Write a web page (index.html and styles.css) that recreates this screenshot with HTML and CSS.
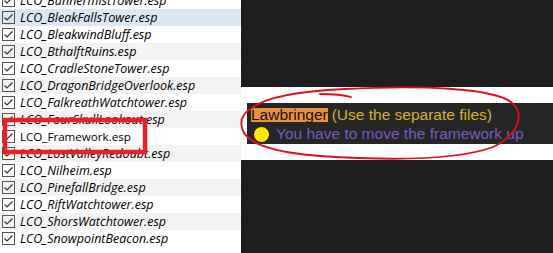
FILE: index.html
```html
<!DOCTYPE html>
<html>
<head>
<meta charset="utf-8">
<link rel="stylesheet" href="styles.css">
</head>
<body>
<div class="app">
  <div class="list">
    <div class="row"><span class="cb"><svg viewBox="0 0 13 13"><rect x="0.5" y="0.5" width="12" height="12"/><polyline points="2.5,6.5 5,9 10.5,3.5"/></svg></span><span class="name">LCO_BunnermistTower.esp</span></div>
    <div class="row sel"><span class="cb"><svg viewBox="0 0 13 13"><rect x="0.5" y="0.5" width="12" height="12"/><polyline points="2.5,6.5 5,9 10.5,3.5"/></svg></span><span class="name">LCO_BleakFallsTower.esp</span></div>
    <div class="row"><span class="cb"><svg viewBox="0 0 13 13"><rect x="0.5" y="0.5" width="12" height="12"/><polyline points="2.5,6.5 5,9 10.5,3.5"/></svg></span><span class="name">LCO_BleakwindBluff.esp</span></div>
    <div class="row alt"><span class="cb"><svg viewBox="0 0 13 13"><rect x="0.5" y="0.5" width="12" height="12"/><polyline points="2.5,6.5 5,9 10.5,3.5"/></svg></span><span class="name">LCO_BthalftRuins.esp</span></div>
    <div class="row"><span class="cb"><svg viewBox="0 0 13 13"><rect x="0.5" y="0.5" width="12" height="12"/><polyline points="2.5,6.5 5,9 10.5,3.5"/></svg></span><span class="name">LCO_CradleStoneTower.esp</span></div>
    <div class="row alt"><span class="cb"><svg viewBox="0 0 13 13"><rect x="0.5" y="0.5" width="12" height="12"/><polyline points="2.5,6.5 5,9 10.5,3.5"/></svg></span><span class="name">LCO_DragonBridgeOverlook.esp</span></div>
    <div class="row"><span class="cb"><svg viewBox="0 0 13 13"><rect x="0.5" y="0.5" width="12" height="12"/><polyline points="2.5,6.5 5,9 10.5,3.5"/></svg></span><span class="name">LCO_FalkreathWatchtower.esp</span></div>
    <div class="row alt"><span class="cb"><svg viewBox="0 0 13 13"><rect x="0.5" y="0.5" width="12" height="12"/><polyline points="2.5,6.5 5,9 10.5,3.5"/></svg></span><span class="name">LCO_FourSkullLookout.esp</span></div>
    <div class="row"><span class="cb"><svg viewBox="0 0 13 13"><rect x="0.5" y="0.5" width="12" height="12"/><polyline points="2.5,6.5 5,9 10.5,3.5"/></svg></span><span class="name master">LCO_Framework.esp</span></div>
    <div class="row alt"><span class="cb"><svg viewBox="0 0 13 13"><rect x="0.5" y="0.5" width="12" height="12"/><polyline points="2.5,6.5 5,9 10.5,3.5"/></svg></span><span class="name">LCO_LostValleyRedoubt.esp</span></div>
    <div class="row"><span class="cb"><svg viewBox="0 0 13 13"><rect x="0.5" y="0.5" width="12" height="12"/><polyline points="2.5,6.5 5,9 10.5,3.5"/></svg></span><span class="name">LCO_Nilheim.esp</span></div>
    <div class="row alt"><span class="cb"><svg viewBox="0 0 13 13"><rect x="0.5" y="0.5" width="12" height="12"/><polyline points="2.5,6.5 5,9 10.5,3.5"/></svg></span><span class="name">LCO_PinefallBridge.esp</span></div>
    <div class="row"><span class="cb"><svg viewBox="0 0 13 13"><rect x="0.5" y="0.5" width="12" height="12"/><polyline points="2.5,6.5 5,9 10.5,3.5"/></svg></span><span class="name">LCO_RiftWatchtower.esp</span></div>
    <div class="row alt"><span class="cb"><svg viewBox="0 0 13 13"><rect x="0.5" y="0.5" width="12" height="12"/><polyline points="2.5,6.5 5,9 10.5,3.5"/></svg></span><span class="name">LCO_ShorsWatchtower.esp</span></div>
    <div class="row"><span class="cb"><svg viewBox="0 0 13 13"><rect x="0.5" y="0.5" width="12" height="12"/><polyline points="2.5,6.5 5,9 10.5,3.5"/></svg></span><span class="name">LCO_SnowpointBeacon.esp</span></div>
  </div>
  <div class="pane">
    <div class="band">
      <div class="note">
        <div class="line1"><span class="mod">Lawbringer</span> (Use the separate files)</div>
        <div class="line2"><span class="dot"></span>You have to move the framework up</div>
      </div>
    </div>
  </div>
  <svg class="ink" width="553" height="253" viewBox="0 0 553 253">
    <rect class="box" x="5" y="120" width="140" height="32"/>
    <path class="loop" d="M320 94 C334 94 344 95 351 97 M252 108 C266 97 300 91 345 89 C420 85 492 88 511 102 C525 113 520 134 493 147 C455 161 380 160 320 156 C280 153 250 146 243 131 C239 121 243 113 252 108"/>
  </svg>
</div>
</body>
</html>
```
FILE: styles.css
```css
* { box-sizing: border-box; }
html, body { margin: 0; padding: 0; }
body { width: 553px; height: 253px; overflow: hidden; background: #fff; }
.app { position: relative; display: flex; width: 553px; height: 253px; overflow: hidden; }
.list { width: 241px; flex: none; margin-top: -8px; background: #fff; }
.row { height: 17px; display: flex; align-items: center; padding-left: 2px; }
.row.alt { background: #f3f3f3; }
.row.sel { background: #dbe8f4; }
.cb { width: 13px; height: 13px; flex: none; display: block; }
.cb svg { display: block; width: 13px; height: 13px; }
.cb rect { fill: #fff; stroke: #555; stroke-width: 1; }
.cb polyline { fill: none; stroke: #333; stroke-width: 1.2; }
.row.alt .cb rect { fill: #f3f3f3; }
.row.sel .cb rect { fill: #dbe8f4; }
.name { margin-left: 5px; font-family: "Open Sans", sans-serif; font-style: italic; font-size: 12.5px; color: #000; white-space: nowrap; }
.name.master { font-style: normal; font-size: 11.6px; }
.pane { flex: 1; background: #1e1e1e; padding-top: 87px; }
.band { background: #fff; height: 73px; padding: 16px 0 0 6px; }
.note { background: #262626; height: 41px; padding: 3px 0 0 4px; font-family: "Liberation Sans", Arial, sans-serif; font-size: 15.5px; white-space: nowrap; }
.line1 { height: 18px; display: flex; align-items: center; color: #d6b12a; }
.mod { display: inline-block; background: #ef8f3c; color: #111; line-height: 14px; height: 14px; margin-right: 4px; }
.line2 { height: 20px; display: flex; align-items: center; color: #7a5ac8; }
.dot { width: 17px; height: 17px; border-radius: 50%; background: #ffec00; border: 1.5px solid #111; margin: 0 6px 0 2px; flex: none; }
.ink { position: absolute; left: 0; top: 0; pointer-events: none; }
.ink .box { fill: none; stroke: #e8202a; stroke-width: 4.5; }
.ink .loop { fill: none; stroke: #e0101a; stroke-width: 1.8; stroke-linecap: round; }
```
